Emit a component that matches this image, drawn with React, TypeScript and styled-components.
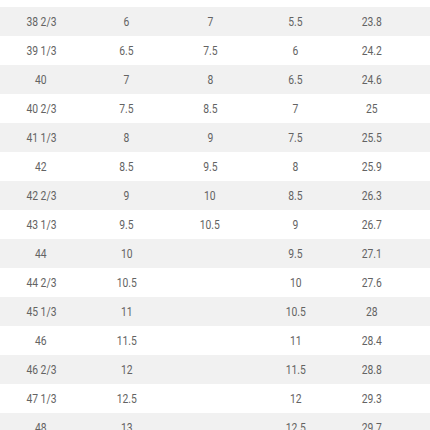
import styled, { createGlobalStyle } from "styled-components";

const GlobalStyle = createGlobalStyle`
  html, body {
    margin: 0;
    padding: 0;
    background: #fff;
    overflow: hidden;
  }
  body {
    font-family: Roboto, "Liberation Sans", Arial, sans-serif;
  }
`;

const Table = styled.div`
  width: 430px;
  margin-top: -22px;
  display: flex;
  flex-direction: column;
`;

const Row = styled.div<{ $shaded: boolean }>`
  display: grid;
  grid-template-columns: 82px 89px 78px 93px 60px 1fr;
  height: 29px;
  align-items: center;
  background: ${(p) => (p.$shaded ? "#f1f1f1" : "#ffffff")};
`;

const Cell = styled.div`
  display: flex;
  justify-content: center;
  align-items: center;
  font-size: 12px;
  color: #636363;
  white-space: nowrap;
`;

const Value = styled.span`
  display: inline-block;
  transform: scaleX(0.86);
`;

const rows: string[][] = [
  ["38", "5.5", "6.5", "5", "23.4"],
  ["38 2/3", "6", "7", "5.5", "23.8"],
  ["39 1/3", "6.5", "7.5", "6", "24.2"],
  ["40", "7", "8", "6.5", "24.6"],
  ["40 2/3", "7.5", "8.5", "7", "25"],
  ["41 1/3", "8", "9", "7.5", "25.5"],
  ["42", "8.5", "9.5", "8", "25.9"],
  ["42 2/3", "9", "10", "8.5", "26.3"],
  ["43 1/3", "9.5", "10.5", "9", "26.7"],
  ["44", "10", "", "9.5", "27.1"],
  ["44 2/3", "10.5", "", "10", "27.6"],
  ["45 1/3", "11", "", "10.5", "28"],
  ["46", "11.5", "", "11", "28.4"],
  ["46 2/3", "12", "", "11.5", "28.8"],
  ["47 1/3", "12.5", "", "12", "29.3"],
  ["48", "13", "", "12.5", "29.7"],
];

export default function App() {
  return (
    <>
      <GlobalStyle />
      <Table>
        {rows.map((r, i) => (
          <Row key={i} $shaded={i % 2 === 1}>
            {r.map((v, j) => (
              <Cell key={j}>{v && <Value>{v}</Value>}</Cell>
            ))}
            <Cell />
          </Row>
        ))}
      </Table>
    </>
  );
}
